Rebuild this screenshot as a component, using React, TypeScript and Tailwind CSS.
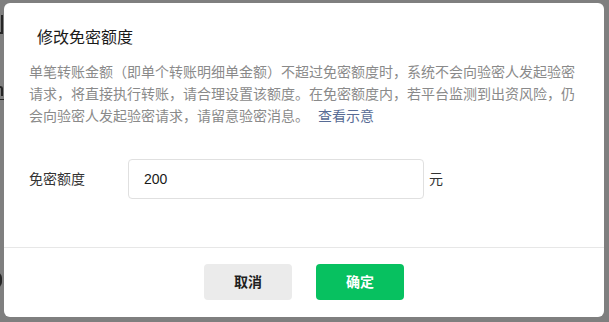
import React from 'react'

const font = "font-['Liberation_Sans','Noto_Sans_CJK_SC',sans-serif]"

const App = () => {
  return (
    <div className={`relative w-[609px] h-[322px] overflow-hidden bg-[#7f7f7f] pt-[3px] pl-[4px] ${font}`}>
      {/* edge of the page behind the overlay */}
      <div className="absolute left-0 top-[15px] w-[3px] h-[19px] border-r-2 border-b-2 border-[#262626]"></div>
      <div className="absolute left-0 top-[86px] w-[3px] h-[10px] border-t-2 border-r-2 border-[#262626] rounded-tr-[3px]"></div>
      <div className="absolute left-0 top-[99px] w-[4px] h-[1px] bg-[#262626]"></div>
      <div className="absolute left-[-4px] top-[272px] w-[6px] h-[16px] border-r-2 border-[#262626] rounded-r-full"></div>

      <div className="relative w-[600px] bg-white rounded-[6px] flex flex-col">
        <div className="pt-[23px] pl-[33px] text-[16px] leading-[24px] text-[#1a1a1a]">修改免密额度</div>

        <div className="mt-[11px] px-[25px] text-[14px] leading-[22px] text-[#8a8a8a]">
          单笔转账金额（即单个转账明细单金额）不超过免密额度时，系统不会向验密人发起验密请求，将直接执行转账，请合理设置该额度。在免密额度内，若平台监测到出资风险，仍会向验密人发起验密请求，请留意验密消息。
          <span className="ml-[9px] text-[#576b95]">查看示意</span>
        </div>

        <div className="mt-[32px] px-[25px] flex items-center">
          <span className="w-[99px] text-[14px] text-[#333]">免密额度</span>
          <div className="w-[296px] h-[40px] border border-[#e0e0e0] rounded-[4px] flex items-center pl-[15px] text-[14px] text-[#1a1a1a]">
            200
          </div>
          <span className="ml-[5px] text-[14px] text-[#333]">元</span>
        </div>

        <div className="mt-[48px] border-t border-[#e7e7e7] pt-[16px] pb-[17px] flex justify-center gap-[24px]">
          <button className="w-[88px] h-[36px] rounded-[4px] bg-[#ebebeb] text-[14px] font-semibold text-[#1f1f1f]">取消</button>
          <button className="w-[88px] h-[36px] rounded-[4px] bg-[#07c160] text-[14px] font-semibold text-white">确定</button>
        </div>
      </div>
    </div>
  )
}

export default App
